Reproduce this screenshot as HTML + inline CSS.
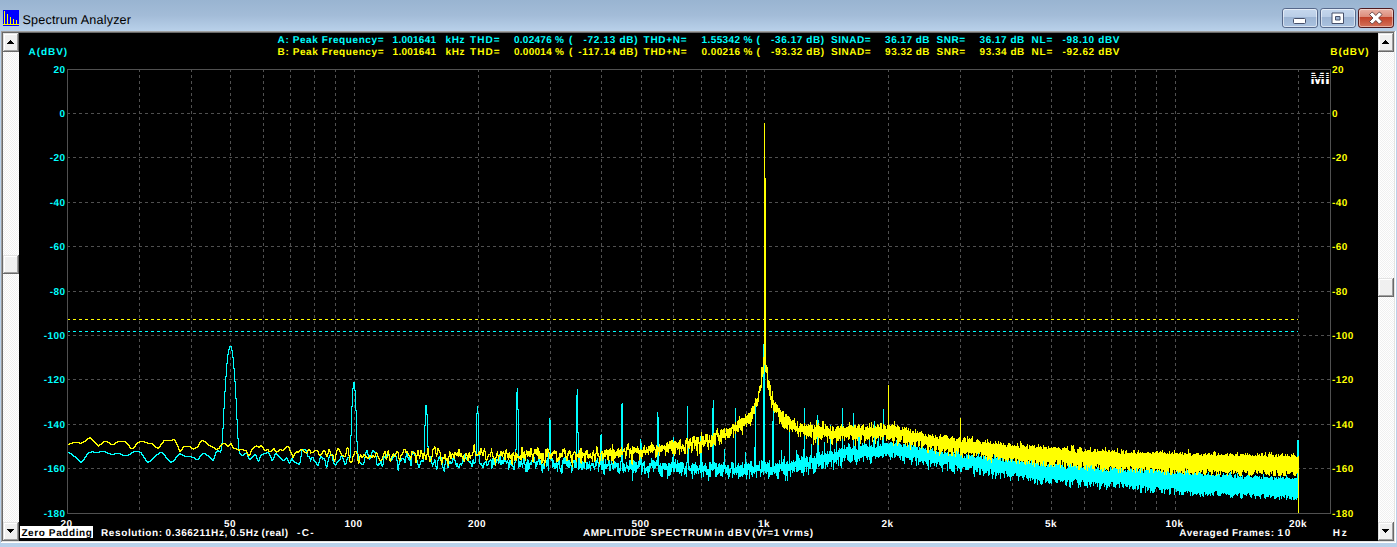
<!DOCTYPE html>
<html><head><meta charset="utf-8"><title>Spectrum Analyzer</title>
<style>html,body{margin:0;padding:0}body{width:1397px;height:547px;overflow:hidden;position:relative;background:#b9d1ea;font-family:"Liberation Sans",sans-serif}</style></head>
<body>
<svg width="1397" height="547" viewBox="0 0 1397 547" style="position:absolute;left:0;top:0" font-family="Liberation Sans, sans-serif" font-size="10.67" font-weight="bold" text-rendering="geometricPrecision">
<defs>
<linearGradient id="tb" x1="0" y1="0" x2="0" y2="1"><stop offset="0" stop-color="#99b4d1"/><stop offset="0.5" stop-color="#a3bcd8"/><stop offset="1" stop-color="#b9d1ea"/></linearGradient>
<linearGradient id="bt" x1="0" y1="0" x2="0" y2="1"><stop offset="0" stop-color="#c6d8ee"/><stop offset="0.46" stop-color="#b9cde6"/><stop offset="0.47" stop-color="#9db5d4"/><stop offset="1" stop-color="#abc3e0"/></linearGradient>
<linearGradient id="bc" x1="0" y1="0" x2="0" y2="1"><stop offset="0" stop-color="#eab4a8"/><stop offset="0.46" stop-color="#dc8a78"/><stop offset="0.47" stop-color="#c2432b"/><stop offset="1" stop-color="#d4745d"/></linearGradient>
<pattern id="dz" width="2" height="2" patternUnits="userSpaceOnUse"><rect width="2" height="2" fill="#ffffff"/><rect width="1" height="1" fill="#f0f0f0"/><rect x="1" y="1" width="1" height="1" fill="#f0f0f0"/></pattern>
<g id="rb"><rect width="16" height="18" fill="#696969"/><rect width="15" height="17" fill="#e3e3e3"/><rect x="1" y="1" width="14" height="16" fill="#a0a0a0"/><rect x="1" y="1" width="13" height="15" fill="#ffffff"/><rect x="2" y="2" width="12" height="14" fill="#f0f0f0"/></g>
<g id="th"><rect width="16" height="19" fill="#696969"/><rect width="15" height="18" fill="#e3e3e3"/><rect x="1" y="1" width="14" height="17" fill="#a0a0a0"/><rect x="1" y="1" width="13" height="16" fill="#ffffff"/><rect x="2" y="2" width="12" height="15" fill="#f0f0f0"/></g>
</defs>

<g shape-rendering="crispEdges">
<rect x="0" y="0" width="1397" height="547" fill="#b9d1ea"/>
<rect x="0" y="0" width="1397" height="31" fill="url(#tb)"/>
<!-- client edge -->
<rect x="1" y="31" width="1395" height="512" fill="#ffffff"/>
<rect x="1" y="31" width="1394" height="511" fill="#a0a0a0"/>
<rect x="2" y="32" width="1393" height="510" fill="#e3e3e3"/>
<rect x="2" y="32" width="1392" height="509" fill="#696969"/>
<rect x="3" y="33" width="1391" height="508" fill="#000000"/>
<!-- scrollbars -->
<rect x="3" y="33" width="16" height="508" fill="url(#dz)"/>
<rect x="1378" y="33" width="16" height="508" fill="url(#dz)"/>
<use href="#th" x="3" y="33"/><use href="#th" x="3" y="522"/>
<use href="#th" x="1378" y="33"/><use href="#th" x="1378" y="522"/>
<use href="#th" x="3" y="255"/><use href="#th" x="1378" y="278"/>
<path d="M10 40h1v1h1v1h1v1h1v1h-7v-1h1v-1h1v-1h1z M1385 40h1v1h1v1h1v1h1v1h-7v-1h1v-1h1v-1h1z" fill="#000"/>
<path d="M7 529h7v1h-1v1h-1v1h-1v1h-1v-1h-1v-1h-1v-1h-1z M1382 529h7v1h-1v1h-1v1h-1v1h-1v-1h-1v-1h-1v-1h-1z" fill="#000"/>
<!-- app icon -->
<rect x="3" y="10" width="16" height="16" fill="#0000ff"/>
<path d="M4 11h1v13h-1z M7 14h1v10h-1z M10 17h1v7h-1z M13 19h1v5h-1z M16 20h1v4h-1z M3 24h16v1h-16z" fill="#ffff00"/>
<!-- zero padding box -->
<rect x="20" y="526" width="73" height="12" fill="#ffffff"/>
</g>
<!-- caption buttons -->
<g>
<rect x="1282.5" y="8.5" width="35" height="19" rx="2.6" fill="url(#bt)" stroke="#56688a"/>
<rect x="1283.5" y="9.5" width="33" height="17" rx="1.8" fill="none" stroke="#ffffff" stroke-opacity=".55"/>
<rect x="1320.5" y="8.5" width="35" height="19" rx="2.6" fill="url(#bt)" stroke="#56688a"/>
<rect x="1321.5" y="9.5" width="33" height="17" rx="1.8" fill="none" stroke="#ffffff" stroke-opacity=".55"/>
<rect x="1358.5" y="8.5" width="35" height="19" rx="2.6" fill="url(#bc)" stroke="#4e1a1f"/>
<rect x="1359.5" y="9.5" width="33" height="17" rx="1.8" fill="none" stroke="#ffffff" stroke-opacity=".45"/>
<rect x="1293.5" y="18.5" width="12" height="5" rx="1" fill="#ffffff" stroke="#47506a"/>
<path d="M1332 13h11.500v10.500h-11.500z M1335.500 16.500v3.500h4.500v-3.500z" fill="#ffffff" stroke="#47506a" fill-rule="evenodd"/>
<path d="M1369.500 14.500l2.300-2.200h1l3 3.200 3-3.200h1l2.300 2.200-3.500 3.500 3.500 3.500-2.300 2.200h-1l-3-3.200-3 3.200h-1l-2.300-2.200 3.500-3.500z" fill="#ffffff" stroke="#5a3a3a" stroke-width=".9"/>
</g>

<g shape-rendering="crispEdges" fill="none">
<path d="M139.5 69V513M191.5 69V513M230.5 69V513M263.5 69V513M290.5 69V513M314.5 69V513M335.5 69V513M354.5 69V513M478.5 69V513M550.5 69V513M601.5 69V513M641.5 69V513M673.5 69V513M701.5 69V513M725.5 69V513M746.5 69V513M764.5 69V513M888.5 69V513M960.5 69V513M1012.5 69V513M1051.5 69V513M1084.5 69V513M1111.5 69V513M1135.5 69V513M1156.5 69V513M1175.5 69V513M1298.5 69V513" stroke="#505050" stroke-dasharray="3 3"/>
<path d="M67 113.5H1330M67 157.5H1330M67 202.5H1330M67 246.5H1330M67 291.5H1330M67 335.5H1330M67 379.5H1330M67 424.5H1330M67 468.5H1330" stroke="#505050" stroke-dasharray="3 3"/>
<path d="M67 319.5H1298" stroke="#ffff00" stroke-dasharray="3 3"/>
<path d="M67 331.5H1298" stroke="#00ffff" stroke-dasharray="3 3"/>
<path d="M67.5 452V453M68.5 452V453M69.5 452V454M70.5 453V454M71.5 453V455M72.5 454V456M73.5 455V457M74.5 456V457M75.5 456V458M76.5 457V459M77.5 458V460M78.5 459V461M79.5 460V462M80.5 461V463M81.5 461V463M82.5 460V462M83.5 459V461M84.5 457V460M85.5 456V458M86.5 454V457M87.5 453V455M88.5 452V454M89.5 452V453M90.5 452V453M91.5 451V453M92.5 451V452M93.5 451V453M94.5 452V453M95.5 452V453M96.5 452V453M97.5 452V453M98.5 452V453M99.5 451V453M100.5 451V452M101.5 451V452M102.5 451V452M103.5 451V452M104.5 451V452M105.5 451V453M106.5 452V453M107.5 452V454M108.5 453V454M109.5 453V454M110.5 453V455M111.5 454V455M112.5 454V455M113.5 454V455M114.5 453V455M115.5 453V454M116.5 453V454M117.5 453V454M118.5 453V454M119.5 453V454M120.5 453V455M121.5 454V455M122.5 454V456M123.5 455V456M124.5 455V456M125.5 455V456M126.5 455V456M127.5 455V456M128.5 454V456M129.5 454V455M130.5 453V455M131.5 452V454M132.5 452V453M133.5 451V453M134.5 451V452M135.5 451V452M136.5 451V452M137.5 451V452M138.5 451V452M139.5 451V453M140.5 452V453M141.5 452V455M142.5 454V456M143.5 455V458M144.5 457V459M145.5 458V461M146.5 460V462M147.5 461V463M148.5 461V463M149.5 461V462M150.5 460V462M151.5 459V461M152.5 458V460M153.5 457V459M154.5 456V458M155.5 455V457M156.5 454V456M157.5 454V455M158.5 453V455M159.5 452V454M160.5 452V453M161.5 452V453M162.5 452V454M163.5 453V455M164.5 454V456M165.5 455V458M166.5 457V459M167.5 458V460M168.5 459V461M169.5 460V462M170.5 461V463M171.5 461V463M172.5 461V462M173.5 460V462M174.5 459V461M175.5 457V460M176.5 456V458M177.5 455V457M178.5 454V456M179.5 453V455M180.5 453V455M181.5 454V455M182.5 454V456M183.5 455V456M184.5 455V457M185.5 456V457M186.5 456V457M187.5 456V457M188.5 456V457M189.5 456V457M190.5 456V457M191.5 456V458M192.5 457V458M193.5 457V458M194.5 457V459M195.5 458V460M196.5 459V460M197.5 459V460M198.5 458V460M199.5 456V459M200.5 455V457M201.5 454V456M202.5 453V455M203.5 453V454M204.5 453V454M205.5 453V455M206.5 454V456M207.5 455V456M208.5 455V457M209.5 456V458M210.5 457V459M211.5 458V460M212.5 459V461M213.5 458V461M214.5 455V459M215.5 452V456M216.5 451V453M217.5 450V452M218.5 450V452M219.5 451V452M220.5 450V453M221.5 443V451M222.5 428V444M223.5 408V429M224.5 391V409M225.5 376V392M226.5 363V377M227.5 354V364M228.5 349V355M229.5 346V350M230.5 346V347M231.5 346V351M232.5 350V358M233.5 357V369M234.5 368V382M235.5 381V399M236.5 398V420M237.5 419V439M238.5 438V451M239.5 450V454M240.5 453V455M241.5 454V456M242.5 455V456M243.5 454V456M244.5 453V455M245.5 453V454M246.5 453V454M247.5 453V457M248.5 456V459M249.5 458V460M250.5 458V460M251.5 457V459M252.5 456V458M253.5 455V457M254.5 454V456M255.5 454V456M256.5 455V459M257.5 458V461M258.5 460V462M259.5 457V461M260.5 455V458M261.5 454V456M262.5 454V455M263.5 453V455M264.5 453V454M265.5 453V454M266.5 452V454M267.5 452V453M268.5 452V454M269.5 453V456M270.5 455V458M271.5 457V461M272.5 459V461M273.5 457V460M274.5 454V458M275.5 453V455M276.5 453V455M277.5 454V456M278.5 455V457M279.5 456V458M280.5 457V459M281.5 458V460M282.5 459V461M283.5 460V461M284.5 459V461M285.5 458V460M286.5 457V459M287.5 458V461M288.5 460V463M289.5 462V464M290.5 460V463M291.5 458V461M292.5 458V461M293.5 460V462M294.5 461V463M295.5 462V463M296.5 462V464M297.5 463V464M298.5 463V465M299.5 462V465M300.5 456V463M301.5 450V457M302.5 449V451M303.5 449V450M304.5 449V450M305.5 449V451M306.5 450V454M307.5 453V457M308.5 456V457M309.5 456V459M310.5 458V462M311.5 457V460M312.5 457V458M313.5 457V461M314.5 460V462M315.5 461V463M316.5 462V465M317.5 464V466M318.5 462V466M319.5 458V463M320.5 456V459M321.5 456V458M322.5 457V460M323.5 458V459M324.5 458V461M325.5 460V466M326.5 465V468M327.5 461V467M328.5 457V462M329.5 455V458M330.5 454V456M331.5 454V456M332.5 455V461M333.5 460V464M334.5 463V465M335.5 464V466M336.5 462V465M337.5 461V463M338.5 460V462M339.5 459V461M340.5 456V460M341.5 455V457M342.5 455V459M343.5 458V462M344.5 461V465M345.5 463V465M346.5 459V464M347.5 457V460M348.5 457V458M349.5 457V460M350.5 435V458M351.5 406V436M352.5 388V407M353.5 382V389M354.5 382V391M355.5 390V411M356.5 410V442M357.5 441V455M358.5 454V461M359.5 460V463M360.5 462V464M361.5 463V465M362.5 464V465M363.5 462V465M364.5 457V463M365.5 452V458M366.5 450V453M367.5 450V455M368.5 454V459M369.5 458V460M370.5 455V459M371.5 452V456M372.5 450V453M373.5 450V452M374.5 451V453M375.5 452V457M376.5 456V465M377.5 464V466M378.5 463V466M379.5 463V465M380.5 461V464M381.5 461V466M382.5 464V467M383.5 457V465M384.5 456V458M385.5 456V459M386.5 454V457M387.5 455V456M388.5 454V456M389.5 454V459M390.5 458V461M391.5 459V461M392.5 457V460M393.5 455V458M394.5 454V456M395.5 454V457M396.5 456V461M397.5 460V470M398.5 464V471M399.5 460V465M400.5 460V462M401.5 458V461M402.5 458V459M403.5 458V460M404.5 459V463M405.5 456V463M406.5 452V457M407.5 452V458M408.5 457V460M409.5 457V461M410.5 460V466M411.5 454V466M412.5 451V455M413.5 451V453M414.5 452V456M415.5 455V461M416.5 459V461M417.5 460V465M418.5 464V468M419.5 464V468M420.5 461V465M421.5 460V462M422.5 460V462M423.5 455V462M424.5 425V456M425.5 405V426M426.5 405V415M427.5 414V447M428.5 446V457M429.5 456V459M430.5 456V459M431.5 456V464M432.5 463V467M433.5 462V465M434.5 459V463M435.5 460V467M436.5 466V470M437.5 460V469M438.5 457V461M439.5 456V459M440.5 457V460M441.5 457V462M442.5 461V468M443.5 467V471M444.5 464V472M445.5 459V465M446.5 458V460M447.5 459V468M448.5 462V468M449.5 461V464M450.5 461V464M451.5 462V464M452.5 458V463M453.5 458V460M454.5 459V461M455.5 460V465M456.5 463V467M457.5 463V467M458.5 466V468M459.5 464V468M460.5 463V465M461.5 463V466M462.5 459V464M463.5 460V462M464.5 454V461M465.5 454V458M466.5 457V460M467.5 456V460M468.5 457V462M469.5 461V463M470.5 461V464M471.5 463V467M472.5 460V467M473.5 459V464M474.5 462V464M475.5 453V463M476.5 413V454M477.5 406V414M478.5 413V456M479.5 455V464M480.5 463V465M481.5 463V466M482.5 465V468M483.5 463V468M484.5 462V465M485.5 461V463M486.5 461V466M487.5 464V466M488.5 461V465M489.5 460V462M490.5 459V461M491.5 460V469M492.5 458V468M493.5 459V465M494.5 462V465M495.5 462V463M496.5 459V463M497.5 459V461M498.5 460V464M499.5 454V463M500.5 455V465M501.5 460V465M502.5 460V464M503.5 457V464M504.5 458V462M505.5 460V462M506.5 461V464M507.5 460V463M508.5 462V470M509.5 460V468M510.5 460V465M511.5 460V466M512.5 460V467M513.5 466V470M514.5 462V470M515.5 449V463M516.5 392V450M517.5 388V410M518.5 409V468M519.5 461V467M520.5 461V467M521.5 460V465M522.5 463V468M523.5 457V464M524.5 457V465M525.5 464V472M526.5 462V472M527.5 459V472M528.5 460V470M529.5 463V469M530.5 462V465M531.5 460V465M532.5 456V461M533.5 458V463M534.5 457V463M535.5 462V469M536.5 461V467M537.5 461V465M538.5 457V462M539.5 458V465M540.5 460V465M541.5 462V471M542.5 464V473M543.5 463V469M544.5 460V469M545.5 457V462M546.5 460V467M547.5 458V466M548.5 449V471M549.5 418V450M550.5 420V460M551.5 458V461M552.5 458V468M553.5 460V467M554.5 463V469M555.5 463V469M556.5 462V468M557.5 463V472M558.5 460V465M559.5 460V469M560.5 468V472M561.5 465V474M562.5 460V473M563.5 458V464M564.5 457V464M565.5 453V464M566.5 460V466M567.5 460V467M568.5 460V468M569.5 460V468M570.5 462V466M571.5 465V473M572.5 462V471M573.5 460V463M574.5 460V468M575.5 460V468M576.5 395V468M577.5 389V433M578.5 432V470M579.5 458V469M580.5 459V468M581.5 461V470M582.5 461V470M583.5 462V468M584.5 462V469M585.5 461V463M586.5 462V470M587.5 462V469M588.5 464V469M589.5 461V468M590.5 465V471M591.5 463V466M592.5 463V466M593.5 463V468M594.5 466V470M595.5 461V467M596.5 460V466M597.5 458V463M598.5 462V472M599.5 462V467M600.5 435V465M601.5 434V470M602.5 461V470M603.5 457V474M604.5 464V475M605.5 459V469M606.5 464V469M607.5 464V467M608.5 461V466M609.5 460V471M610.5 464V471M611.5 459V465M612.5 463V469M613.5 464V470M614.5 461V468M615.5 462V468M616.5 463V467M617.5 463V472M618.5 463V473M619.5 468V474M620.5 461V471M621.5 404V462M622.5 403V471M623.5 463V473M624.5 464V471M625.5 467V472M626.5 462V468M627.5 465V469M628.5 466V472M629.5 460V470M630.5 460V469M631.5 462V470M632.5 464V481M633.5 460V473M634.5 461V471M635.5 462V473M636.5 462V472M637.5 465V469M638.5 461V468M639.5 460V467M640.5 439V465M641.5 443V475M642.5 463V472M643.5 462V466M644.5 461V474M645.5 468V474M646.5 467V471M647.5 466V473M648.5 466V478M649.5 463V472M650.5 463V468M651.5 458V466M652.5 460V468M653.5 460V472M654.5 461V469M655.5 462V468M656.5 460V466M657.5 412V466M658.5 417V472M659.5 465V474M660.5 463V476M661.5 466V477M662.5 463V477M663.5 463V469M664.5 463V470M665.5 463V470M666.5 464V470M667.5 466V479M668.5 463V476M669.5 463V476M670.5 464V475M671.5 462V472M672.5 457V468M673.5 437V472M674.5 462V472M675.5 459V468M676.5 464V472M677.5 460V472M678.5 463V472M679.5 463V474M680.5 462V473M681.5 462V476M682.5 462V472M683.5 463V469M684.5 468V475M685.5 466V474M686.5 462V477M687.5 406V463M688.5 443V470M689.5 466V471M690.5 468V471M691.5 465V474M692.5 463V479M693.5 464V471M694.5 464V475M695.5 462V473M696.5 465V474M697.5 466V471M698.5 468V474M699.5 465V470M700.5 436V473M701.5 443V478M702.5 462V472M703.5 466V477M704.5 465V471M705.5 463V472M706.5 466V475M707.5 469V475M708.5 469V481M709.5 462V477M710.5 462V477M711.5 464V470M712.5 408V471M713.5 400V470M714.5 462V469M715.5 463V477M716.5 463V477M717.5 467V475M718.5 464V474M719.5 463V473M720.5 465V476M721.5 464V476M722.5 465V477M723.5 462V472M724.5 449V469M725.5 465V474M726.5 467V473M727.5 465V475M728.5 465V479M729.5 469V477M730.5 468V473M731.5 462V469M732.5 462V478M733.5 463V474M734.5 468V475M735.5 408V473M736.5 467V475M737.5 465V473M738.5 463V479M739.5 466V477M740.5 465V477M741.5 465V476M742.5 462V477M743.5 468V475M744.5 464V474M745.5 452V475M746.5 462V479M747.5 464V475M748.5 463V470M749.5 464V479M750.5 461V472M751.5 461V475M752.5 466V477M753.5 467V473M754.5 447V474M755.5 402V472M756.5 465V478M757.5 465V471M758.5 465V471M759.5 461V471M760.5 469V477M761.5 460V473M762.5 461V472M763.5 344V475M764.5 344V471M765.5 462V473M766.5 464V474M767.5 462V472M768.5 463V479M769.5 460V477M770.5 467V475M771.5 467V475M772.5 421V475M773.5 410V472M774.5 466V474M775.5 463V473M776.5 464V476M777.5 463V479M778.5 464V479M779.5 460V472M780.5 464V469M781.5 450V471M782.5 462V471M783.5 459V474M784.5 456V475M785.5 464V481M786.5 462V476M787.5 461V481M788.5 464V471M789.5 426V471M790.5 463V477M791.5 461V470M792.5 462V473M793.5 460V471M794.5 462V472M795.5 461V467M796.5 450V472M797.5 454V472M798.5 455V471M799.5 458V470M800.5 460V470M801.5 456V473M802.5 457V473M803.5 449V476M804.5 408V472M805.5 458V467M806.5 456V472M807.5 457V467M808.5 462V475M809.5 457V469M810.5 455V469M811.5 444V463M812.5 458V469M813.5 458V474M814.5 456V473M815.5 458V472M816.5 453V469M817.5 415V464M818.5 420V467M819.5 452V466M820.5 455V465M821.5 454V469M822.5 451V469M823.5 455V468M824.5 442V462M825.5 453V469M826.5 454V465M827.5 451V467M828.5 454V464M829.5 451V462M830.5 425V462M831.5 451V467M832.5 452V460M833.5 454V470M834.5 449V463M835.5 452V462M836.5 438V464M837.5 452V460M838.5 450V466M839.5 448V457M840.5 449V466M841.5 448V468M842.5 408V462M843.5 449V458M844.5 445V461M845.5 449V458M846.5 447V455M847.5 447V460M848.5 443V461M849.5 444V462M850.5 447V463M851.5 449V462M852.5 448V461M853.5 413V455M854.5 446V460M855.5 446V462M856.5 449V465M857.5 450V462M858.5 437V459M859.5 436V461M860.5 446V458M861.5 446V458M862.5 443V457M863.5 445V462M864.5 434V456M865.5 444V456M866.5 444V458M867.5 446V460M868.5 447V457M869.5 434V460M870.5 446V464M871.5 445V463M872.5 447V457M873.5 440V456M874.5 421V456M875.5 448V459M876.5 447V457M877.5 441V457M878.5 438V458M879.5 446V457M880.5 444V456M881.5 446V456M882.5 439V458M883.5 409V457M884.5 443V454M885.5 443V456M886.5 443V456M887.5 443V454M888.5 444V455M889.5 443V457M890.5 442V460M891.5 442V457M892.5 443V458M893.5 443V453M894.5 444V458M895.5 443V457M896.5 440V455M897.5 445V456M898.5 444V456M899.5 443V458M900.5 444V460M901.5 445V456M902.5 447V461M903.5 444V461M904.5 444V464M905.5 444V457M906.5 446V458M907.5 447V458M908.5 445V458M909.5 443V460M910.5 445V460M911.5 445V465M912.5 447V462M913.5 445V458M914.5 446V457M915.5 444V461M916.5 447V466M917.5 447V458M918.5 450V465M919.5 447V462M920.5 448V462M921.5 448V461M922.5 447V463M923.5 448V465M924.5 449V461M925.5 448V462M926.5 450V464M927.5 448V466M928.5 449V470M929.5 450V460M930.5 449V467M931.5 449V464M932.5 448V463M933.5 451V463M934.5 449V466M935.5 451V463M936.5 451V467M937.5 452V464M938.5 452V462M939.5 451V465M940.5 451V466M941.5 448V468M942.5 452V472M943.5 454V465M944.5 447V464M945.5 452V464M946.5 453V464M947.5 452V471M948.5 453V462M949.5 454V469M950.5 454V469M951.5 450V471M952.5 451V472M953.5 452V472M954.5 454V474M955.5 453V465M956.5 450V466M957.5 454V471M958.5 452V468M959.5 454V469M960.5 454V472M961.5 452V472M962.5 454V468M963.5 458V467M964.5 456V467M965.5 458V470M966.5 454V470M967.5 455V470M968.5 456V470M969.5 455V468M970.5 456V468M971.5 455V468M972.5 455V466M973.5 454V474M974.5 457V477M975.5 458V470M976.5 457V472M977.5 456V472M978.5 451V468M979.5 457V475M980.5 456V475M981.5 457V469M982.5 459V471M983.5 454V476M984.5 456V474M985.5 458V473M986.5 457V473M987.5 457V471M988.5 457V476M989.5 457V475M990.5 457V469M991.5 458V474M992.5 458V479M993.5 459V475M994.5 453V472M995.5 457V479M996.5 458V476M997.5 457V473M998.5 458V475M999.5 456V473M1000.5 456V479M1001.5 461V473M1002.5 456V473M1003.5 457V474M1004.5 462V478M1005.5 460V471M1006.5 459V474M1007.5 461V477M1008.5 460V476M1009.5 461V477M1010.5 458V481M1011.5 459V477M1012.5 457V476M1013.5 461V476M1014.5 461V474M1015.5 458V473M1016.5 459V476M1017.5 461V476M1018.5 460V481M1019.5 460V477M1020.5 462V476M1021.5 461V476M1022.5 460V478M1023.5 462V480M1024.5 461V477M1025.5 461V475M1026.5 462V478M1027.5 459V479M1028.5 461V481M1029.5 460V478M1030.5 463V481M1031.5 459V478M1032.5 462V480M1033.5 462V479M1034.5 458V484M1035.5 463V483M1036.5 464V479M1037.5 462V485M1038.5 463V480M1039.5 466V481M1040.5 462V484M1041.5 462V485M1042.5 463V484M1043.5 461V480M1044.5 462V478M1045.5 465V483M1046.5 467V482M1047.5 465V481M1048.5 464V483M1049.5 463V484M1050.5 465V483M1051.5 464V484M1052.5 461V479M1053.5 466V479M1054.5 464V480M1055.5 464V482M1056.5 464V483M1057.5 464V483M1058.5 464V480M1059.5 462V480M1060.5 464V482M1061.5 465V481M1062.5 463V482M1063.5 467V481M1064.5 465V480M1065.5 463V485M1066.5 469V486M1067.5 468V482M1068.5 464V480M1069.5 463V487M1070.5 463V488M1071.5 465V482M1072.5 466V485M1073.5 465V481M1074.5 465V480M1075.5 465V479M1076.5 465V480M1077.5 466V483M1078.5 467V488M1079.5 464V485M1080.5 464V487M1081.5 467V482M1082.5 468V480M1083.5 467V482M1084.5 466V486M1085.5 468V486M1086.5 464V486M1087.5 467V488M1088.5 462V482M1089.5 467V485M1090.5 465V487M1091.5 464V484M1092.5 468V482M1093.5 466V486M1094.5 468V482M1095.5 469V484M1096.5 469V483M1097.5 467V487M1098.5 467V483M1099.5 470V490M1100.5 467V489M1101.5 462V486M1102.5 465V484M1103.5 469V483M1104.5 466V487M1105.5 471V485M1106.5 470V490M1107.5 471V488M1108.5 468V486M1109.5 471V487M1110.5 467V484M1111.5 469V482M1112.5 467V482M1113.5 466V487M1114.5 467V487M1115.5 468V488M1116.5 468V485M1117.5 467V484M1118.5 466V484M1119.5 467V488M1120.5 466V482M1121.5 468V484M1122.5 470V487M1123.5 470V488M1124.5 471V484M1125.5 470V486M1126.5 472V487M1127.5 470V487M1128.5 470V485M1129.5 470V489M1130.5 469V487M1131.5 469V486M1132.5 468V489M1133.5 470V490M1134.5 469V489M1135.5 470V489M1136.5 467V486M1137.5 471V490M1138.5 471V489M1139.5 469V485M1140.5 469V493M1141.5 468V493M1142.5 468V488M1143.5 473V488M1144.5 468V486M1145.5 470V493M1146.5 468V487M1147.5 470V491M1148.5 469V490M1149.5 472V488M1150.5 469V493M1151.5 469V491M1152.5 469V493M1153.5 469V493M1154.5 466V492M1155.5 471V489M1156.5 470V487M1157.5 471V487M1158.5 470V488M1159.5 471V490M1160.5 471V490M1161.5 471V493M1162.5 471V493M1163.5 472V489M1164.5 471V494M1165.5 472V490M1166.5 473V489M1167.5 469V490M1168.5 469V489M1169.5 473V495M1170.5 474V494M1171.5 472V488M1172.5 470V488M1173.5 474V488M1174.5 472V495M1175.5 473V489M1176.5 474V492M1177.5 471V491M1178.5 471V491M1179.5 472V495M1180.5 472V492M1181.5 473V495M1182.5 474V495M1183.5 474V495M1184.5 472V492M1185.5 471V492M1186.5 473V491M1187.5 470V493M1188.5 473V491M1189.5 471V492M1190.5 474V496M1191.5 475V492M1192.5 473V496M1193.5 473V495M1194.5 470V494M1195.5 473V494M1196.5 472V495M1197.5 473V494M1198.5 473V493M1199.5 472V495M1200.5 472V497M1201.5 474V494M1202.5 474V496M1203.5 476V497M1204.5 472V492M1205.5 474V495M1206.5 475V494M1207.5 474V496M1208.5 472V495M1209.5 475V494M1210.5 475V496M1211.5 475V493M1212.5 475V495M1213.5 475V496M1214.5 476V492M1215.5 475V491M1216.5 475V491M1217.5 474V495M1218.5 474V496M1219.5 474V496M1220.5 477V496M1221.5 477V494M1222.5 475V493M1223.5 473V494M1224.5 475V493M1225.5 475V494M1226.5 474V495M1227.5 476V494M1228.5 475V495M1229.5 473V495M1230.5 472V498M1231.5 475V497M1232.5 477V498M1233.5 478V496M1234.5 475V495M1235.5 474V494M1236.5 478V495M1237.5 473V496M1238.5 476V494M1239.5 477V493M1240.5 476V498M1241.5 477V499M1242.5 475V498M1243.5 479V494M1244.5 477V495M1245.5 477V495M1246.5 476V496M1247.5 475V494M1248.5 475V493M1249.5 476V495M1250.5 477V497M1251.5 477V498M1252.5 478V495M1253.5 477V494M1254.5 476V496M1255.5 475V499M1256.5 476V496M1257.5 476V496M1258.5 477V496M1259.5 476V497M1260.5 479V499M1261.5 477V495M1262.5 479V494M1263.5 474V494M1264.5 477V498M1265.5 477V499M1266.5 477V497M1267.5 477V497M1268.5 478V497M1269.5 478V495M1270.5 477V498M1271.5 476V497M1272.5 477V496M1273.5 480V496M1274.5 477V499M1275.5 478V499M1276.5 477V498M1277.5 479V497M1278.5 477V497M1279.5 478V500M1280.5 475V496M1281.5 478V499M1282.5 477V496M1283.5 477V497M1284.5 479V498M1285.5 478V495M1286.5 475V500M1287.5 477V498M1288.5 478V496M1289.5 478V499M1290.5 479V499M1291.5 479V500M1292.5 478V497M1293.5 479V500M1294.5 478V500M1295.5 478V499M1296.5 478V500M1297.5 440V498M1298.5 440V514" stroke="#00ffff"/>
<path d="M67.5 444V445M68.5 444V445M69.5 443V445M70.5 443V444M71.5 443V444M72.5 442V444M73.5 442V443M74.5 442V443M75.5 442V443M76.5 442V443M77.5 442V443M78.5 442V443M79.5 442V444M80.5 443V444M81.5 442V444M82.5 442V443M83.5 441V443M84.5 441V442M85.5 440V442M86.5 439V441M87.5 438V440M88.5 438V439M89.5 437V439M90.5 437V439M91.5 438V440M92.5 439V441M93.5 440V442M94.5 441V443M95.5 442V444M96.5 443V445M97.5 444V446M98.5 445V447M99.5 444V446M100.5 444V445M101.5 443V445M102.5 442V444M103.5 441V443M104.5 441V442M105.5 441V442M106.5 441V442M107.5 441V443M108.5 442V443M109.5 442V444M110.5 443V445M111.5 444V445M112.5 444V445M113.5 444V445M114.5 443V445M115.5 442V444M116.5 442V443M117.5 441V443M118.5 441V442M119.5 441V442M120.5 441V442M121.5 441V442M122.5 441V442M123.5 441V442M124.5 441V442M125.5 441V443M126.5 442V444M127.5 443V445M128.5 444V446M129.5 445V448M130.5 447V449M131.5 448V449M132.5 448V449M133.5 447V449M134.5 446V448M135.5 444V447M136.5 443V445M137.5 442V444M138.5 442V443M139.5 441V443M140.5 441V442M141.5 441V442M142.5 441V442M143.5 441V442M144.5 441V443M145.5 442V443M146.5 442V443M147.5 442V444M148.5 443V444M149.5 443V444M150.5 443V444M151.5 443V444M152.5 443V445M153.5 444V446M154.5 445V447M155.5 446V448M156.5 447V448M157.5 447V449M158.5 447V449M159.5 446V448M160.5 444V447M161.5 443V445M162.5 442V444M163.5 440V443M164.5 440V441M165.5 440V441M166.5 440V441M167.5 440V441M168.5 440V441M169.5 440V441M170.5 440V441M171.5 440V441M172.5 439V441M173.5 439V440M174.5 439V441M175.5 440V443M176.5 442V445M177.5 444V447M178.5 446V450M179.5 449V452M180.5 450V452M181.5 449V451M182.5 447V450M183.5 446V448M184.5 446V447M185.5 446V447M186.5 446V447M187.5 446V447M188.5 446V447M189.5 446V447M190.5 446V448M191.5 447V449M192.5 448V449M193.5 448V450M194.5 448V449M195.5 447V449M196.5 447V448M197.5 446V448M198.5 444V447M199.5 442V445M200.5 441V443M201.5 440V442M202.5 440V441M203.5 440V442M204.5 441V442M205.5 441V443M206.5 442V444M207.5 443V445M208.5 444V446M209.5 445V446M210.5 445V447M211.5 446V447M212.5 446V448M213.5 447V448M214.5 447V449M215.5 448V450M216.5 449V450M217.5 448V450M218.5 448V449M219.5 446V449M220.5 445V447M221.5 444V446M222.5 443V445M223.5 443V444M224.5 443V444M225.5 443V445M226.5 444V446M227.5 445V447M228.5 445V447M229.5 444V446M230.5 443V445M231.5 443V446M232.5 445V448M233.5 447V449M234.5 448V449M235.5 448V449M236.5 448V450M237.5 449V450M238.5 449V451M239.5 449V451M240.5 449V450M241.5 449V450M242.5 449V450M243.5 449V451M244.5 450V451M245.5 450V451M246.5 450V453M247.5 452V455M248.5 454V456M249.5 454V456M250.5 451V455M251.5 449V452M252.5 448V450M253.5 447V449M254.5 446V448M255.5 446V447M256.5 445V447M257.5 446V447M258.5 446V448M259.5 446V448M260.5 445V447M261.5 445V447M262.5 446V448M263.5 447V450M264.5 449V451M265.5 450V451M266.5 449V451M267.5 449V450M268.5 449V452M269.5 451V452M270.5 451V452M271.5 450V452M272.5 449V451M273.5 448V450M274.5 448V451M275.5 450V452M276.5 451V453M277.5 451V452M278.5 450V452M279.5 449V451M280.5 449V450M281.5 449V451M282.5 450V451M283.5 449V451M284.5 448V450M285.5 447V449M286.5 446V448M287.5 446V447M288.5 446V448M289.5 447V451M290.5 450V453M291.5 452V455M292.5 454V458M293.5 455V458M294.5 453V456M295.5 452V454M296.5 451V453M297.5 451V453M298.5 451V453M299.5 450V452M300.5 449V451M301.5 449V450M302.5 449V451M303.5 450V452M304.5 451V453M305.5 452V453M306.5 452V454M307.5 450V453M308.5 449V451M309.5 449V451M310.5 450V454M311.5 452V453M312.5 452V453M313.5 451V453M314.5 450V452M315.5 450V451M316.5 450V451M317.5 450V452M318.5 451V455M319.5 454V456M320.5 454V456M321.5 453V455M322.5 451V454M323.5 450V452M324.5 450V452M325.5 451V455M326.5 454V457M327.5 453V457M328.5 449V454M329.5 449V452M330.5 451V456M331.5 455V456M332.5 454V456M333.5 455V460M334.5 459V462M335.5 454V460M336.5 450V455M337.5 448V451M338.5 448V450M339.5 449V452M340.5 451V454M341.5 453V456M342.5 455V456M343.5 455V457M344.5 456V457M345.5 453V457M346.5 448V454M347.5 447V449M348.5 448V456M349.5 455V462M350.5 461V463M351.5 461V463M352.5 456V462M353.5 454V457M354.5 451V455M355.5 451V452M356.5 451V454M357.5 453V461M358.5 460V464M359.5 456V463M360.5 454V457M361.5 455V458M362.5 456V458M363.5 454V457M364.5 454V456M365.5 455V458M366.5 456V458M367.5 457V459M368.5 457V459M369.5 455V458M370.5 455V457M371.5 456V458M372.5 455V458M373.5 455V457M374.5 456V458M375.5 453V457M376.5 452V454M377.5 453V457M378.5 456V459M379.5 458V461M380.5 460V461M381.5 459V461M382.5 456V460M383.5 453V457M384.5 451V454M385.5 451V458M386.5 457V460M387.5 451V458M388.5 450V455M389.5 454V461M390.5 459V462M391.5 456V460M392.5 454V457M393.5 453V456M394.5 455V457M395.5 453V457M396.5 451V454M397.5 451V453M398.5 452V459M399.5 458V461M400.5 455V460M401.5 454V456M402.5 452V455M403.5 449V453M404.5 449V450M405.5 449V453M406.5 451V453M407.5 451V454M408.5 453V456M409.5 455V457M410.5 456V460M411.5 451V458M412.5 451V453M413.5 452V454M414.5 452V454M415.5 453V463M416.5 455V463M417.5 450V456M418.5 450V456M419.5 455V459M420.5 450V457M421.5 450V454M422.5 453V459M423.5 453V459M424.5 452V456M425.5 455V460M426.5 454V460M427.5 448V455M428.5 448V457M429.5 456V462M430.5 459V462M431.5 456V460M432.5 449V457M433.5 448V450M434.5 446V449M435.5 447V454M436.5 453V457M437.5 448V455M438.5 448V451M439.5 450V453M440.5 452V461M441.5 460V465M442.5 457V463M443.5 457V459M444.5 454V459M445.5 454V460M446.5 458V461M447.5 458V464M448.5 456V466M449.5 451V457M450.5 452V459M451.5 454V459M452.5 453V455M453.5 454V458M454.5 452V459M455.5 452V455M456.5 453V456M457.5 452V456M458.5 449V457M459.5 449V456M460.5 453V457M461.5 453V457M462.5 456V459M463.5 455V461M464.5 458V462M465.5 453V459M466.5 453V456M467.5 455V461M468.5 453V461M469.5 452V458M470.5 455V459M471.5 455V456M472.5 452V456M473.5 445V453M474.5 444V452M475.5 451V456M476.5 454V456M477.5 454V456M478.5 452V455M479.5 451V455M480.5 448V455M481.5 448V453M482.5 452V456M483.5 450V456M484.5 448V452M485.5 451V460M486.5 459V461M487.5 456V460M488.5 454V457M489.5 454V455M490.5 452V457M491.5 448V453M492.5 452V457M493.5 456V459M494.5 458V462M495.5 457V466M496.5 453V458M497.5 451V456M498.5 455V461M499.5 455V457M500.5 451V456M501.5 451V456M502.5 452V457M503.5 451V454M504.5 453V460M505.5 450V460M506.5 449V454M507.5 453V458M508.5 453V460M509.5 452V458M510.5 455V459M511.5 454V464M512.5 453V465M513.5 452V456M514.5 455V461M515.5 452V460M516.5 453V461M517.5 454V458M518.5 456V458M519.5 456V459M520.5 455V460M521.5 447V460M522.5 447V458M523.5 452V458M524.5 451V459M525.5 454V461M526.5 450V455M527.5 451V457M528.5 451V456M529.5 451V457M530.5 448V457M531.5 448V455M532.5 454V462M533.5 453V462M534.5 449V454M535.5 449V454M536.5 449V455M537.5 447V456M538.5 448V459M539.5 451V459M540.5 453V459M541.5 453V464M542.5 453V463M543.5 453V461M544.5 460V466M545.5 449V463M546.5 449V457M547.5 448V457M548.5 449V453M549.5 452V459M550.5 454V459M551.5 453V459M552.5 452V456M553.5 451V454M554.5 450V454M555.5 451V454M556.5 451V462M557.5 458V462M558.5 457V461M559.5 453V460M560.5 453V458M561.5 453V457M562.5 449V457M563.5 449V452M564.5 448V454M565.5 450V458M566.5 456V461M567.5 453V461M568.5 451V456M569.5 450V454M570.5 451V458M571.5 455V463M572.5 454V467M573.5 452V455M574.5 451V453M575.5 452V460M576.5 454V462M577.5 454V457M578.5 453V458M579.5 450V458M580.5 448V463M581.5 448V464M582.5 452V458M583.5 453V456M584.5 453V462M585.5 451V463M586.5 450V455M587.5 450V458M588.5 454V459M589.5 454V458M590.5 453V458M591.5 456V459M592.5 452V462M593.5 450V456M594.5 454V462M595.5 453V461M596.5 446V454M597.5 447V456M598.5 453V457M599.5 456V464M600.5 453V461M601.5 451V454M602.5 451V461M603.5 453V459M604.5 450V457M605.5 450V457M606.5 449V455M607.5 450V460M608.5 450V461M609.5 449V456M610.5 448V456M611.5 450V461M612.5 444V461M613.5 449V464M614.5 450V459M615.5 452V458M616.5 451V456M617.5 449V456M618.5 448V458M619.5 450V457M620.5 449V457M621.5 447V455M622.5 451V455M623.5 449V452M624.5 448V452M625.5 451V459M626.5 447V456M627.5 444V450M628.5 443V450M629.5 449V458M630.5 448V454M631.5 450V464M632.5 446V465M633.5 447V454M634.5 447V453M635.5 448V452M636.5 448V453M637.5 446V453M638.5 448V454M639.5 450V460M640.5 449V457M641.5 450V459M642.5 450V457M643.5 447V453M644.5 445V453M645.5 450V455M646.5 447V453M647.5 449V453M648.5 446V455M649.5 446V451M650.5 445V453M651.5 442V452M652.5 444V453M653.5 445V451M654.5 447V450M655.5 449V458M656.5 445V457M657.5 446V455M658.5 447V452M659.5 444V456M660.5 446V452M661.5 445V452M662.5 445V451M663.5 446V449M664.5 445V450M665.5 446V456M666.5 443V452M667.5 442V452M668.5 444V453M669.5 441V449M670.5 441V449M671.5 440V451M672.5 440V454M673.5 442V454M674.5 441V456M675.5 441V454M676.5 442V448M677.5 443V450M678.5 442V449M679.5 440V455M680.5 439V449M681.5 446V452M682.5 444V449M683.5 445V451M684.5 447V454M685.5 440V454M686.5 438V444M687.5 438V454M688.5 441V448M689.5 439V449M690.5 438V446M691.5 442V453M692.5 437V451M693.5 436V443M694.5 436V449M695.5 440V446M696.5 437V451M697.5 437V456M698.5 437V444M699.5 442V454M700.5 441V453M701.5 432V453M702.5 436V445M703.5 436V447M704.5 440V446M705.5 434V444M706.5 434V442M707.5 434V447M708.5 440V450M709.5 435V443M710.5 440V447M711.5 435V447M712.5 436V446M713.5 433V444M714.5 433V445M715.5 433V446M716.5 430V435M717.5 428V437M718.5 433V441M719.5 435V445M720.5 430V442M721.5 429V444M722.5 430V438M723.5 429V438M724.5 428V438M725.5 433V440M726.5 428V436M727.5 429V438M728.5 429V438M729.5 428V438M730.5 428V436M731.5 427V434M732.5 424V429M733.5 424V438M734.5 425V431M735.5 422V434M736.5 425V431M737.5 421V432M738.5 420V432M739.5 416V428M740.5 419V430M741.5 418V431M742.5 418V435M743.5 418V426M744.5 418V426M745.5 414V424M746.5 416V427M747.5 415V423M748.5 413V424M749.5 413V424M750.5 412V426M751.5 408V422M752.5 406V419M753.5 406V414M754.5 403V414M755.5 398V406M756.5 399V407M757.5 398V406M758.5 391V402M759.5 386V393M760.5 385V391M761.5 367V388M762.5 367V377M763.5 357V374M764.5 123V365M765.5 178V372M766.5 365V373M767.5 367V388M768.5 380V390M769.5 381V396M770.5 385V400M771.5 396V408M772.5 391V405M773.5 400V411M774.5 403V413M775.5 402V412M776.5 404V413M777.5 405V412M778.5 408V417M779.5 408V424M780.5 410V422M781.5 412V424M782.5 411V427M783.5 411V428M784.5 417V429M785.5 414V428M786.5 414V429M787.5 416V430M788.5 416V425M789.5 417V432M790.5 419V429M791.5 421V430M792.5 420V432M793.5 420V429M794.5 418V430M795.5 423V432M796.5 426V431M797.5 421V434M798.5 428V437M799.5 426V432M800.5 423V437M801.5 424V432M802.5 424V432M803.5 426V434M804.5 423V436M805.5 426V435M806.5 425V439M807.5 426V436M808.5 424V437M809.5 425V436M810.5 422V437M811.5 425V438M812.5 425V432M813.5 429V445M814.5 425V440M815.5 427V443M816.5 420V439M817.5 425V437M818.5 423V445M819.5 426V438M820.5 427V439M821.5 427V440M822.5 421V438M823.5 421V435M824.5 429V437M825.5 424V436M826.5 426V437M827.5 426V443M828.5 428V436M829.5 429V439M830.5 426V439M831.5 431V444M832.5 426V445M833.5 427V439M834.5 431V438M835.5 429V438M836.5 427V443M837.5 426V441M838.5 426V441M839.5 428V439M840.5 426V441M841.5 424V436M842.5 427V439M843.5 426V436M844.5 428V441M845.5 428V437M846.5 427V438M847.5 427V437M848.5 426V440M849.5 422V439M850.5 425V435M851.5 425V436M852.5 426V440M853.5 427V440M854.5 425V439M855.5 425V446M856.5 428V439M857.5 426V441M858.5 424V437M859.5 425V437M860.5 428V444M861.5 426V440M862.5 425V435M863.5 424V436M864.5 430V443M865.5 427V441M866.5 427V439M867.5 426V440M868.5 428V439M869.5 423V440M870.5 427V437M871.5 422V436M872.5 428V442M873.5 425V438M874.5 428V437M875.5 426V444M876.5 427V439M877.5 424V438M878.5 425V438M879.5 427V436M880.5 423V440M881.5 423V437M882.5 429V440M883.5 424V437M884.5 425V435M885.5 426V435M886.5 429V441M887.5 425V439M888.5 385V440M889.5 425V440M890.5 426V439M891.5 425V438M892.5 424V441M893.5 425V446M894.5 421V441M895.5 426V437M896.5 427V438M897.5 425V446M898.5 426V444M899.5 427V442M900.5 430V442M901.5 430V440M902.5 427V436M903.5 429V443M904.5 427V443M905.5 428V445M906.5 427V443M907.5 430V447M908.5 428V442M909.5 431V443M910.5 429V450M911.5 433V445M912.5 431V445M913.5 431V442M914.5 433V446M915.5 429V447M916.5 433V442M917.5 431V441M918.5 433V447M919.5 432V446M920.5 432V441M921.5 431V449M922.5 433V447M923.5 434V446M924.5 436V445M925.5 434V444M926.5 436V445M927.5 437V453M928.5 434V453M929.5 435V447M930.5 435V450M931.5 436V448M932.5 434V446M933.5 436V446M934.5 438V451M935.5 435V454M936.5 437V450M937.5 437V446M938.5 439V450M939.5 436V456M940.5 434V454M941.5 437V452M942.5 437V451M943.5 436V449M944.5 435V453M945.5 435V451M946.5 435V450M947.5 436V449M948.5 438V456M949.5 439V452M950.5 438V452M951.5 437V456M952.5 436V456M953.5 438V448M954.5 438V453M955.5 441V457M956.5 439V451M957.5 439V454M958.5 438V452M959.5 437V448M960.5 418V456M961.5 442V455M962.5 440V458M963.5 438V453M964.5 437V454M965.5 438V454M966.5 442V453M967.5 436V452M968.5 439V459M969.5 438V453M970.5 439V453M971.5 438V454M972.5 436V453M973.5 442V457M974.5 442V456M975.5 442V453M976.5 440V456M977.5 439V454M978.5 440V453M979.5 441V454M980.5 442V452M981.5 444V457M982.5 442V455M983.5 442V456M984.5 442V455M985.5 440V459M986.5 443V456M987.5 439V461M988.5 442V460M989.5 443V459M990.5 441V460M991.5 444V463M992.5 444V457M993.5 443V454M994.5 444V455M995.5 441V458M996.5 443V457M997.5 444V457M998.5 441V460M999.5 444V459M1000.5 442V458M1001.5 443V458M1002.5 445V458M1003.5 443V461M1004.5 445V459M1005.5 445V461M1006.5 447V460M1007.5 445V462M1008.5 443V460M1009.5 443V458M1010.5 444V459M1011.5 446V462M1012.5 445V459M1013.5 446V459M1014.5 445V458M1015.5 446V462M1016.5 446V464M1017.5 443V459M1018.5 446V460M1019.5 448V464M1020.5 441V461M1021.5 443V461M1022.5 445V462M1023.5 445V461M1024.5 446V464M1025.5 447V465M1026.5 446V462M1027.5 444V464M1028.5 449V460M1029.5 445V464M1030.5 446V461M1031.5 446V460M1032.5 445V465M1033.5 446V463M1034.5 445V467M1035.5 448V460M1036.5 447V464M1037.5 447V463M1038.5 444V465M1039.5 447V462M1040.5 446V466M1041.5 447V464M1042.5 449V466M1043.5 445V461M1044.5 447V466M1045.5 447V467M1046.5 447V466M1047.5 449V462M1048.5 446V462M1049.5 448V467M1050.5 448V465M1051.5 447V465M1052.5 448V467M1053.5 447V465M1054.5 447V467M1055.5 447V462M1056.5 448V460M1057.5 448V465M1058.5 447V465M1059.5 448V464M1060.5 449V468M1061.5 450V460M1062.5 448V465M1063.5 448V462M1064.5 447V467M1065.5 448V469M1066.5 448V463M1067.5 446V466M1068.5 450V465M1069.5 451V467M1070.5 451V464M1071.5 445V467M1072.5 446V463M1073.5 445V467M1074.5 449V466M1075.5 452V466M1076.5 453V468M1077.5 449V465M1078.5 449V470M1079.5 447V470M1080.5 447V468M1081.5 448V467M1082.5 451V462M1083.5 452V466M1084.5 451V469M1085.5 449V470M1086.5 451V465M1087.5 450V471M1088.5 450V467M1089.5 450V468M1090.5 447V466M1091.5 452V465M1092.5 452V469M1093.5 451V469M1094.5 449V471M1095.5 449V466M1096.5 452V467M1097.5 449V464M1098.5 451V468M1099.5 451V465M1100.5 451V470M1101.5 451V469M1102.5 449V472M1103.5 450V471M1104.5 451V468M1105.5 447V470M1106.5 451V469M1107.5 452V470M1108.5 450V472M1109.5 450V467M1110.5 452V466M1111.5 451V467M1112.5 450V470M1113.5 451V468M1114.5 450V468M1115.5 452V467M1116.5 452V469M1117.5 448V469M1118.5 453V473M1119.5 453V469M1120.5 454V473M1121.5 449V467M1122.5 451V472M1123.5 450V470M1124.5 454V469M1125.5 451V469M1126.5 450V467M1127.5 453V469M1128.5 453V470M1129.5 453V471M1130.5 453V466M1131.5 452V467M1132.5 453V472M1133.5 450V469M1134.5 450V470M1135.5 453V473M1136.5 454V468M1137.5 452V472M1138.5 450V469M1139.5 453V468M1140.5 452V473M1141.5 453V468M1142.5 452V471M1143.5 453V469M1144.5 453V471M1145.5 453V467M1146.5 453V470M1147.5 452V470M1148.5 452V470M1149.5 453V473M1150.5 453V468M1151.5 454V468M1152.5 452V469M1153.5 452V473M1154.5 453V471M1155.5 452V469M1156.5 451V469M1157.5 451V472M1158.5 453V469M1159.5 452V471M1160.5 451V469M1161.5 452V473M1162.5 450V472M1163.5 453V470M1164.5 452V475M1165.5 453V472M1166.5 454V475M1167.5 453V471M1168.5 454V472M1169.5 451V468M1170.5 454V475M1171.5 453V475M1172.5 452V473M1173.5 454V470M1174.5 450V474M1175.5 453V470M1176.5 453V472M1177.5 453V471M1178.5 454V473M1179.5 453V472M1180.5 452V473M1181.5 454V471M1182.5 452V474M1183.5 455V473M1184.5 453V475M1185.5 453V468M1186.5 454V473M1187.5 454V469M1188.5 449V473M1189.5 453V475M1190.5 453V473M1191.5 456V473M1192.5 455V474M1193.5 454V475M1194.5 454V473M1195.5 454V472M1196.5 453V475M1197.5 453V475M1198.5 453V473M1199.5 455V471M1200.5 455V473M1201.5 454V472M1202.5 456V470M1203.5 454V474M1204.5 454V475M1205.5 453V475M1206.5 455V473M1207.5 454V469M1208.5 453V471M1209.5 453V472M1210.5 455V472M1211.5 454V476M1212.5 455V474M1213.5 452V470M1214.5 451V472M1215.5 452V471M1216.5 456V476M1217.5 455V472M1218.5 453V475M1219.5 455V471M1220.5 455V475M1221.5 454V471M1222.5 455V472M1223.5 455V472M1224.5 455V472M1225.5 454V473M1226.5 454V473M1227.5 453V476M1228.5 456V473M1229.5 454V472M1230.5 453V471M1231.5 454V474M1232.5 454V470M1233.5 455V474M1234.5 456V473M1235.5 454V471M1236.5 454V473M1237.5 452V472M1238.5 456V474M1239.5 456V476M1240.5 454V476M1241.5 454V476M1242.5 454V472M1243.5 454V470M1244.5 455V472M1245.5 453V473M1246.5 455V473M1247.5 453V471M1248.5 455V475M1249.5 454V476M1250.5 455V475M1251.5 456V476M1252.5 455V475M1253.5 456V474M1254.5 456V472M1255.5 455V470M1256.5 456V473M1257.5 453V474M1258.5 455V471M1259.5 454V473M1260.5 456V473M1261.5 453V474M1262.5 453V474M1263.5 456V470M1264.5 455V472M1265.5 452V474M1266.5 456V475M1267.5 457V474M1268.5 454V475M1269.5 452V476M1270.5 454V472M1271.5 452V474M1272.5 455V471M1273.5 455V476M1274.5 457V476M1275.5 455V476M1276.5 454V470M1277.5 457V473M1278.5 454V476M1279.5 456V476M1280.5 455V476M1281.5 454V475M1282.5 453V473M1283.5 456V476M1284.5 456V476M1285.5 454V476M1286.5 456V471M1287.5 454V474M1288.5 456V474M1289.5 456V474M1290.5 457V473M1291.5 454V472M1292.5 455V472M1293.5 453V475M1294.5 455V476M1295.5 456V476M1296.5 457V474M1297.5 457V473M1298.5 456V514" stroke="#ffff00"/>
<rect x="67.5" y="69.5" width="1263" height="444" stroke="#505050"/>
</g>
<g font-size="10">
<text x="277.6" y="43" fill="#00ffff" textLength="105.9" lengthAdjust="spacing">A: Peak Frequency=</text>
<text x="392.6" y="43" fill="#00ffff" textLength="43.4" lengthAdjust="spacing">1.001641</text>
<text x="445.6" y="43" fill="#00ffff" textLength="18.9" lengthAdjust="spacing">kHz</text>
<text x="470.0" y="43" fill="#00ffff" textLength="29.5" lengthAdjust="spacing">THD=</text>
<text x="513.9" y="43" fill="#00ffff" textLength="50.1" lengthAdjust="spacing">0.02476 %</text>
<text x="569.0" y="43" fill="#00ffff" textLength="4.0" lengthAdjust="spacing">(</text>
<text x="583.6" y="43" fill="#00ffff" textLength="53.9" lengthAdjust="spacing">-72.13 dB)</text>
<text x="643.6" y="43" fill="#00ffff" textLength="42.9" lengthAdjust="spacing">THD+N=</text>
<text x="701.6" y="43" fill="#00ffff" textLength="50.9" lengthAdjust="spacing">1.55342 %</text>
<text x="756.4" y="43" fill="#00ffff" textLength="3.4" lengthAdjust="spacing">(</text>
<text x="771.1" y="43" fill="#00ffff" textLength="53.1" lengthAdjust="spacing">-36.17 dB)</text>
<text x="831.0" y="43" fill="#00ffff" textLength="39.5" lengthAdjust="spacing">SINAD=</text>
<text x="885.1" y="43" fill="#00ffff" textLength="44.4" lengthAdjust="spacing">36.17 dB</text>
<text x="936.6" y="43" fill="#00ffff" textLength="28.6" lengthAdjust="spacing">SNR=</text>
<text x="979.6" y="43" fill="#00ffff" textLength="44.7" lengthAdjust="spacing">36.17 dB</text>
<text x="1031.5" y="43" fill="#00ffff" textLength="20.9" lengthAdjust="spacing">NL=</text>
<text x="1062.6" y="43" fill="#00ffff" textLength="56.9" lengthAdjust="spacing">-98.10 dBV</text>
<text x="277.6" y="55" fill="#ffff00" textLength="105.9" lengthAdjust="spacing">B: Peak Frequency=</text>
<text x="392.6" y="55" fill="#ffff00" textLength="43.4" lengthAdjust="spacing">1.001641</text>
<text x="445.6" y="55" fill="#ffff00" textLength="18.9" lengthAdjust="spacing">kHz</text>
<text x="470.0" y="55" fill="#ffff00" textLength="29.5" lengthAdjust="spacing">THD=</text>
<text x="513.9" y="55" fill="#ffff00" textLength="50.1" lengthAdjust="spacing">0.00014 %</text>
<text x="569.0" y="55" fill="#ffff00" textLength="4.0" lengthAdjust="spacing">(</text>
<text x="578.3" y="55" fill="#ffff00" textLength="59.2" lengthAdjust="spacing">-117.14 dB)</text>
<text x="643.6" y="55" fill="#ffff00" textLength="42.9" lengthAdjust="spacing">THD+N=</text>
<text x="701.6" y="55" fill="#ffff00" textLength="50.9" lengthAdjust="spacing">0.00216 %</text>
<text x="756.4" y="55" fill="#ffff00" textLength="3.4" lengthAdjust="spacing">(</text>
<text x="771.1" y="55" fill="#ffff00" textLength="53.1" lengthAdjust="spacing">-93.32 dB)</text>
<text x="831.0" y="55" fill="#ffff00" textLength="39.5" lengthAdjust="spacing">SINAD=</text>
<text x="885.1" y="55" fill="#ffff00" textLength="44.4" lengthAdjust="spacing">93.32 dB</text>
<text x="936.6" y="55" fill="#ffff00" textLength="28.6" lengthAdjust="spacing">SNR=</text>
<text x="979.6" y="55" fill="#ffff00" textLength="44.7" lengthAdjust="spacing">93.34 dB</text>
<text x="1031.5" y="55" fill="#ffff00" textLength="20.9" lengthAdjust="spacing">NL=</text>
<text x="1062.6" y="55" fill="#ffff00" textLength="56.9" lengthAdjust="spacing">-92.62 dBV</text>
<text x="28.6" y="55" fill="#00ffff" textLength="38.5" lengthAdjust="spacing">A(dBV)</text>
<text x="1330.3" y="55" fill="#ffff00" textLength="38.4" lengthAdjust="spacing">B(dBV)</text>
<text x="65.6" y="73" fill="#00ffff" text-anchor="end" letter-spacing="0.44">20</text>
<text x="1332.0" y="73" fill="#ffff00" text-anchor="start" letter-spacing="0.44">20</text>
<text x="65.6" y="117" fill="#00ffff" text-anchor="end" letter-spacing="0.44">0</text>
<text x="1332.0" y="117" fill="#ffff00" text-anchor="start" letter-spacing="0.44">0</text>
<text x="65.6" y="161" fill="#00ffff" text-anchor="end" letter-spacing="0.44">-20</text>
<text x="1332.0" y="161" fill="#ffff00" text-anchor="start" letter-spacing="0.44">-20</text>
<text x="65.6" y="206" fill="#00ffff" text-anchor="end" letter-spacing="0.44">-40</text>
<text x="1332.0" y="206" fill="#ffff00" text-anchor="start" letter-spacing="0.44">-40</text>
<text x="65.6" y="250" fill="#00ffff" text-anchor="end" letter-spacing="0.44">-60</text>
<text x="1332.0" y="250" fill="#ffff00" text-anchor="start" letter-spacing="0.44">-60</text>
<text x="65.6" y="295" fill="#00ffff" text-anchor="end" letter-spacing="0.44">-80</text>
<text x="1332.0" y="295" fill="#ffff00" text-anchor="start" letter-spacing="0.44">-80</text>
<text x="65.6" y="339" fill="#00ffff" text-anchor="end" letter-spacing="0.44">-100</text>
<text x="1332.0" y="339" fill="#ffff00" text-anchor="start" letter-spacing="0.44">-100</text>
<text x="65.6" y="383" fill="#00ffff" text-anchor="end" letter-spacing="0.44">-120</text>
<text x="1332.0" y="383" fill="#ffff00" text-anchor="start" letter-spacing="0.44">-120</text>
<text x="65.6" y="428" fill="#00ffff" text-anchor="end" letter-spacing="0.44">-140</text>
<text x="1332.0" y="428" fill="#ffff00" text-anchor="start" letter-spacing="0.44">-140</text>
<text x="65.6" y="472" fill="#00ffff" text-anchor="end" letter-spacing="0.44">-160</text>
<text x="1332.0" y="472" fill="#ffff00" text-anchor="start" letter-spacing="0.44">-160</text>
<text x="65.6" y="517" fill="#00ffff" text-anchor="end" letter-spacing="0.44">-180</text>
<text x="1332.0" y="517" fill="#ffff00" text-anchor="start" letter-spacing="0.44">-180</text>
<text x="66.5" y="527" fill="#ffffff" text-anchor="middle" letter-spacing="0.44">20</text>
<text x="229.9" y="527" fill="#ffffff" text-anchor="middle" letter-spacing="0.44">50</text>
<text x="353.4" y="527" fill="#ffffff" text-anchor="middle" letter-spacing="0.44">100</text>
<text x="477.0" y="527" fill="#ffffff" text-anchor="middle" letter-spacing="0.44">200</text>
<text x="640.4" y="527" fill="#ffffff" text-anchor="middle" letter-spacing="0.44">500</text>
<text x="763.9" y="527" fill="#ffffff" text-anchor="middle" letter-spacing="0.44">1k</text>
<text x="887.5" y="527" fill="#ffffff" text-anchor="middle" letter-spacing="0.44">2k</text>
<text x="1050.9" y="527" fill="#ffffff" text-anchor="middle" letter-spacing="0.44">5k</text>
<text x="1174.4" y="527" fill="#ffffff" text-anchor="middle" letter-spacing="0.44">10k</text>
<text x="1298.0" y="527" fill="#ffffff" text-anchor="middle" letter-spacing="0.44">20k</text>
<text x="21.4" y="536" fill="#000000" textLength="70.5" lengthAdjust="spacing">Zero Padding</text>
<text x="101.0" y="536" fill="#ffffff" textLength="61.1" lengthAdjust="spacing">Resolution:</text>
<text x="165.6" y="536" fill="#ffffff" textLength="61.6" lengthAdjust="spacing">0.366211Hz,</text>
<text x="230.1" y="536" fill="#ffffff" textLength="28.4" lengthAdjust="spacing">0.5Hz</text>
<text x="261.4" y="536" fill="#ffffff" textLength="26.7" lengthAdjust="spacing">(real)</text>
<text x="297.0" y="536" fill="#ffffff" textLength="16.7" lengthAdjust="spacing">-C-</text>
<text x="582.9" y="536" fill="#ffffff" textLength="62.8" lengthAdjust="spacing">AMPLITUDE</text>
<text x="650.6" y="536" fill="#ffffff" textLength="61.5" lengthAdjust="spacing">SPECTRUM</text>
<text x="714.2" y="536" fill="#ffffff" textLength="9.7" lengthAdjust="spacing">in</text>
<text x="727.5" y="536" fill="#ffffff" textLength="22.7" lengthAdjust="spacing">dBV</text>
<text x="752.0" y="536" fill="#ffffff" textLength="27.2" lengthAdjust="spacing">(Vr=1</text>
<text x="782.6" y="536" fill="#ffffff" textLength="30.5" lengthAdjust="spacing">Vrms)</text>
<text x="1179.2" y="536" fill="#ffffff" textLength="49.3" lengthAdjust="spacing">Averaged</text>
<text x="1231.9" y="536" fill="#ffffff" textLength="42.1" lengthAdjust="spacing">Frames:</text>
<text x="1277.6" y="536" fill="#ffffff" textLength="12.7" lengthAdjust="spacing">10</text>
<text x="1332.8" y="536" fill="#ffffff" textLength="13.9" lengthAdjust="spacing">Hz</text>
</g>
<text x="22.5" y="24" fill="#000000" font-size="12.6" font-weight="normal" textLength="108.5" lengthAdjust="spacing">Spectrum Analyzer</text>
<g><text x="1310.2" y="84" fill="#ffffff" font-size="16.2" font-weight="bold" textLength="19.6" lengthAdjust="spacingAndGlyphs">MI</text><path d="M1309 74.500h21M1309 76.500h21M1309 78.500h21" stroke="#000" shape-rendering="crispEdges"/></g>

</svg>
</body></html>
